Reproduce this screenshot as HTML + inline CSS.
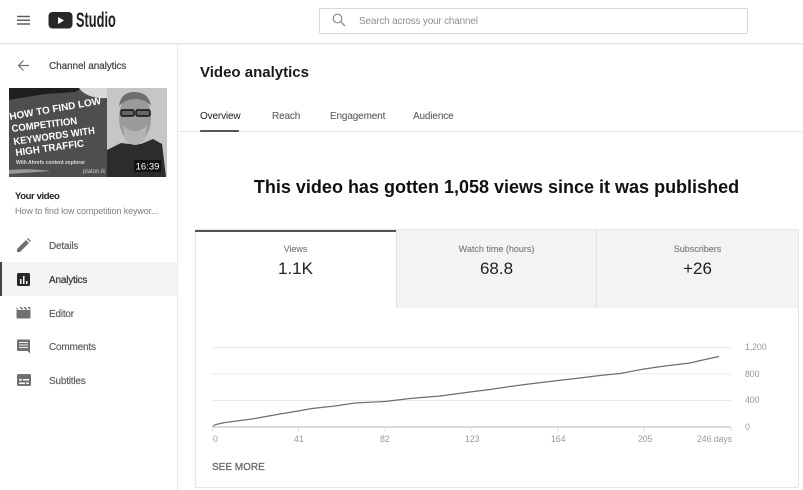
<!DOCTYPE html>
<html><head><meta charset="utf-8">
<style>
html,body{margin:0;padding:0;background:#fff}
#p{position:relative;width:803px;height:490px;overflow:hidden;font-family:"Liberation Sans",sans-serif;background:#fff;filter:blur(.35px)}
.t{position:absolute;white-space:nowrap;line-height:1}
.a{position:absolute}
.nav{font-size:10px;color:#606060;left:49px;letter-spacing:-.2px;-webkit-text-stroke:.2px #606060}
.tab{font-size:10px;color:#606060;letter-spacing:-.15px;-webkit-text-stroke:.1px #606060}
.lab{font-size:9px;color:#777;top:245px;text-align:center;-webkit-text-stroke:.1px #777}
.val{font-size:17px;color:#222;top:260px;text-align:center}
.ax{font-size:8.8px;color:#999;letter-spacing:-.1px}
</style></head><body><div id="p">
<div class="a" style="left:0;top:43px;width:803px;height:1px;background:#e6e6e6"></div>
<div class="a" style="left:0;top:44px;width:803px;height:1px;background:#f3f3f3"></div>
<div class="a" style="left:177px;top:44px;width:1px;height:446px;background:#e8e8e8"></div>

<svg class="a" style="left:0;top:0" width="140" height="40" viewBox="0 0 140 40">
<path d="M17 16.500h13M17 20.250h13M17 24h13" stroke="#606060" stroke-width="1.500" fill="none"/>
<rect x="48.500" y="12" width="24" height="16.500" rx="4" fill="#282828"/>
<path d="M58 17v7l6-3.500z" fill="#fff"/>
</svg>
<div class="t" style="left:76px;top:9.500px;font-size:21px;font-weight:bold;color:#222;transform:scaleX(.61);transform-origin:0 0">Studio</div>

<div class="a" style="left:319px;top:8px;width:427px;height:24px;border:1px solid #d8d8d8;border-radius:2px"></div>
<svg class="a" style="left:332px;top:13px" width="14" height="14" viewBox="0 0 14 14"><circle cx="5.500" cy="5.500" r="4.300" fill="none" stroke="#8a8a8a" stroke-width="1.200"/><path d="M8.700 8.700l4.300 4.300" stroke="#8a8a8a" stroke-width="1.300"/></svg>
<div class="t" style="left:359px;top:16px;font-size:10px;color:#8f8f8f;letter-spacing:-.2px;transform:translateY(.8px)">Search across your channel</div>

<svg class="a" style="left:16px;top:58px" width="15" height="15" viewBox="0 0 15 15"><path d="M13 7.500H2.500M7.500 2.500l-5 5 5 5" fill="none" stroke="#707070" stroke-width="1.200"/></svg>
<div class="t" style="left:49px;top:62px;font-size:10px;color:#444;letter-spacing:-.1px;-webkit-text-stroke:.2px #444">Channel analytics</div>

<svg class="a" style="left:9px;top:88px" width="158" height="89" viewBox="0 0 158 89">
<rect width="158" height="89" fill="#4e4e4e"/>
<rect x="98" width="60" height="89" fill="#c6c6c6"/>
<path d="M0 0h72l-6 4-30 2-36 6z" fill="#1f1f1f"/>
<path d="M70 0h28v10q-20 1-28-10z" fill="#d8d8d8"/>
<path d="M98 89V62l14-7 8 1h12l12-5 9 5 4 33z" fill="#2c2c2c"/>
<ellipse cx="126" cy="30" rx="16" ry="25" fill="#9a9a9a"/>
<path d="M110 18q2-15 17-14q13 1 15 14q-6-7-15-7q-11 0-17 7z" fill="#6e6e6e"/>
<path d="M114 38q12 10 24 0l-2 14q-10 10-20 0z" fill="#b4b4b4"/>
<rect x="112" y="22" width="13" height="6" rx="1.500" fill="#666" stroke="#111" stroke-width="1.400"/>
<rect x="127" y="22" width="14" height="6" rx="1.500" fill="#666" stroke="#111" stroke-width="1.400"/>
<g fill="#fff" font-family="Liberation Sans,sans-serif" font-weight="bold" font-size="10">
<text transform="translate(1 32) rotate(-10)" textLength="93" lengthAdjust="spacingAndGlyphs">HOW TO FIND LOW</text>
<text transform="translate(3 44) rotate(-7)" textLength="66" lengthAdjust="spacingAndGlyphs">COMPETITION</text>
<text transform="translate(5 57) rotate(-8)" textLength="82" lengthAdjust="spacingAndGlyphs">KEYWORDS WITH</text>
<text transform="translate(7 68) rotate(-8)" textLength="69" lengthAdjust="spacingAndGlyphs">HIGH TRAFFIC</text>
</g>
<text x="7" y="76" font-size="5" font-weight="bold" fill="#ddd" font-family="Liberation Sans,sans-serif" textLength="69" lengthAdjust="spacingAndGlyphs">With Ahrefs content explorer</text>
<text x="74" y="85" font-size="6" fill="#ccc" font-family="Liberation Sans,sans-serif">platon.ik</text>
<path d="M0 82q20-2 42 1l-42 3z" fill="#ccc" opacity=".6"/>
<rect x="125" y="72" width="27" height="12" rx="1.500" fill="#111"/>
<text x="138.500" y="81.500" font-size="9.500" fill="#fff" text-anchor="middle" font-family="Liberation Sans,sans-serif">16:39</text>
</svg>

<div class="t" style="left:15px;top:191.500px;font-size:9.500px;font-weight:bold;color:#222;letter-spacing:-.4px">Your video</div>
<div class="t" style="left:15px;top:206.500px;font-size:9px;color:#808080;letter-spacing:-.12px">How to find low competition keywor...</div>

<div class="a" style="left:0;top:262px;width:177px;height:34px;background:#f3f3f3"></div>
<div class="a" style="left:0;top:262px;width:1.500px;height:34px;background:#444"></div>

<svg class="a" style="left:16px;top:238px" width="15" height="152" viewBox="0 0 15 152">
<path d="M1 14v-3L10 2l3 3-9 9zM11 1l1-1 3 3-1 1z" fill="#707070"/>
<rect x="1" y="35" width="13" height="13" rx="1.500" fill="#282828"/>
<path d="M4 41h1.500v5H4zM7 38h1.500v8H7zM10 43h1.500v3H10z" fill="#fff"/>
<path d="M0.500 72h14v7.500q0 1-1 1h-12q-1 0-1-1zM0.500 71.500V69l2 2.500zM3.500 69h2l2 2.500h-2zM7.500 69h2l2 2.500h-2zM11.500 69h2.800v2.500h-.8z" fill="#707070"/>
<path d="M1 102.500q0-1 1-1h11q1 0 1 1V115.500l-2.500-2.500H2q-1 0-1-1z" fill="#707070"/>
<path d="M3 104h9v1H3zM3 106.500h9v1H3zM3 109h9v1H3z" fill="#f0f0f0"/>
<rect x="1" y="136" width="14" height="12" rx="1.500" fill="#707070"/>
<path d="M3 141h3v1.500H3zM7 141h6v1.500H7zM3 144.500h6v1.500H3zM10 144.500h3v1.500h-3z" fill="#fff"/>
</svg>
<div class="t nav" style="top:242px">Details</div>
<div class="t nav" style="top:276px;color:#333;-webkit-text-stroke:.2px #333">Analytics</div>
<div class="t nav" style="top:310px">Editor</div>
<div class="t nav" style="top:343px">Comments</div>
<div class="t nav" style="top:377px">Subtitles</div>

<div class="t" style="left:200px;top:65px;font-size:15px;font-weight:bold;color:#1a1a1a">Video analytics</div>
<div class="t tab" style="left:200px;top:112px;color:#333;-webkit-text-stroke:.1px #333">Overview</div>
<div class="t tab" style="left:272px;top:112px">Reach</div>
<div class="t tab" style="left:330px;top:112px">Engagement</div>
<div class="t tab" style="left:413px;top:112px">Audience</div>
<div class="a" style="left:178px;top:131px;width:625px;height:1px;background:#e8e8e8"></div>
<div class="a" style="left:200px;top:129.500px;width:39px;height:2px;background:#555;border-radius:1px 1px 0 0"></div>

<div class="t" style="left:178px;width:637px;text-align:center;top:178px;font-size:18px;font-weight:bold;color:#111">This video has gotten 1,058 views since it was published</div>

<div class="a" style="left:195px;top:229px;width:602px;height:257px;border:1px solid #e6e6e6;border-radius:2px;box-sizing:content-box"></div>
<div class="a" style="left:396px;top:230px;width:402px;height:78px;background:#f3f3f3"></div>
<div class="a" style="left:396px;top:230px;width:1px;height:78px;background:#e2e2e2"></div>
<div class="a" style="left:596px;top:230px;width:1px;height:78px;background:#e0e0e0"></div>
<div class="a" style="left:195px;top:229.500px;width:201px;height:2.500px;background:#555"></div>

<div class="t lab" style="left:195px;width:201px">Views</div>
<div class="t lab" style="left:396px;width:201px">Watch time (hours)</div>
<div class="t lab" style="left:597px;width:201px">Subscribers</div>
<div class="t val" style="left:195px;width:201px">1.1K</div>
<div class="t val" style="left:396px;width:201px">68.8</div>
<div class="t val" style="left:597px;width:201px">+26</div>

<svg class="a" style="left:0;top:0" width="803" height="490" viewBox="0 0 803 490">
<path d="M212 347.500H731M212 374H731M212 400.500H731" stroke="#eaeaea" stroke-width="1" fill="none"/>
<path d="M212 427H731" stroke="#cfcfcf" stroke-width="1.500" fill="none"/>
<path d="M212.500 427V432M298.500 427V432M385 427V432M471 427V432M558 427V432M644 427V432M731 427V432" stroke="#e0e0e0" stroke-width="1"/>
<path d="M213 426L216 424.500L225 422.500L252 419L280 414L298 411L312 408.500L335 406L355 403L385 401.500L410 398.500L440 396L470 392L490 389.500L510 386.500L525 384.500L558 380.500L580 378L600 375.500L620 373.500L644 369L665 366L690 363L705 359.500L719 356.500" fill="none" stroke="#6e6e6e" stroke-width="1.200"/>
</svg>
<div class="t ax" style="left:213px;top:435px">0</div>
<div class="t ax" style="left:294px;top:435px">41</div>
<div class="t ax" style="left:380px;top:435px">82</div>
<div class="t ax" style="left:465px;top:435px">123</div>
<div class="t ax" style="left:551px;top:435px">164</div>
<div class="t ax" style="left:638px;top:435px">205</div>
<div class="t ax" style="left:697px;top:435px">246 days</div>
<div class="t ax" style="left:745px;top:343px">1,200</div>
<div class="t ax" style="left:745px;top:370px">800</div>
<div class="t ax" style="left:745px;top:396px">400</div>
<div class="t ax" style="left:745px;top:423px">0</div>
<div class="t" style="left:212px;top:462.500px;font-size:10px;color:#666;-webkit-text-stroke:.25px #666">SEE MORE</div>
</div></body></html>
